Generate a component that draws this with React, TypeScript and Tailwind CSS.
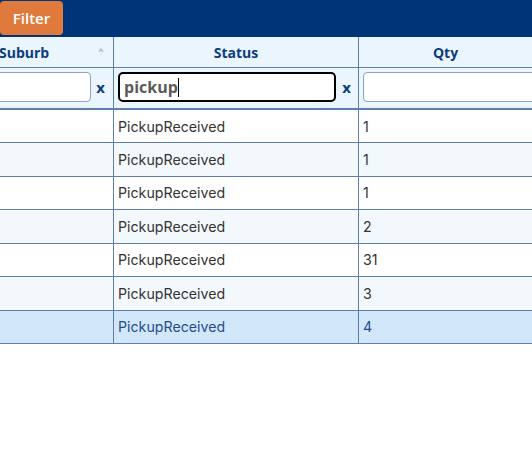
import React from "react";

const rows = [
  { status: "PickupReceived", qty: "1" },
  { status: "PickupReceived", qty: "1" },
  { status: "PickupReceived", qty: "1" },
  { status: "PickupReceived", qty: "2" },
  { status: "PickupReceived", qty: "31" },
  { status: "PickupReceived", qty: "3" },
  { status: "PickupReceived", qty: "4", selected: true },
];

const SortIcon = () => (
  <svg width="8" height="10" viewBox="0 0 8 10">
    <path d="M4 1 L7 4.5 L1 4.5 Z" fill="#b3c0d0" />
    <path d="M4 9 L7 5.5 L1 5.5 Z" fill="#e4ecf5" />
  </svg>
);

const ClearX = () => (
  <span className="font-['Open_Sans',sans-serif] text-[15px] font-bold text-[#0b3d7a] leading-none">
    x
  </span>
);

export default function App() {
  return (
    <div className="w-[532px] h-[458px] bg-white overflow-hidden font-['Inter',sans-serif]">
      {/* top bar */}
      <div className="h-[37px] bg-[#003478] flex items-start pt-px">
        <button className="h-[34px] w-[63px] rounded-[4px] bg-[#e07a3c] text-white font-['Open_Sans',sans-serif] text-[15px] font-semibold flex items-center justify-center pt-px">
          Filter
        </button>
      </div>

      {/* header */}
      <div className="grid grid-cols-[114px_245px_1fr] h-[31px] bg-[#eaf5fe] border-b border-[#5e7fae] font-['Open_Sans',sans-serif] text-[14px] font-bold text-[#0b3d7a]">
        <div className="border-r border-[#5e7fae] flex items-center justify-between pr-[8px]">
          <span className="-ml-px">Suburb</span>
          <SortIcon />
        </div>
        <div className="border-r border-[#5e7fae] flex items-center justify-center">
          Status
        </div>
        <div className="flex items-center justify-center">Qty</div>
      </div>

      {/* filter row */}
      <div className="grid grid-cols-[114px_245px_1fr] h-[42px] bg-[#eaf5fe] border-b-2 border-[#5e7fae]">
        <div className="border-r border-[#5e7fae] flex items-center gap-[5px] pr-[8px] pb-[2px]">
          <div className="h-[30px] flex-1 -ml-4 bg-white border border-[#8ea6c6] rounded-[4px]" />
          <ClearX />
        </div>
        <div className="border-r border-[#5e7fae] flex items-center gap-[6px] pl-[4px] pr-[7px] pb-[2px]">
          <div className="h-[30px] flex-1 bg-white border-2 border-black rounded-[5px] flex items-center pl-[4px]">
            <span className="font-['Open_Sans',sans-serif] text-[16px] font-bold text-[#5a5a5a]">
              pickup
            </span>
            <span className="w-px h-[19px] bg-black" />
          </div>
          <ClearX />
        </div>
        <div className="flex items-center pl-[4px] pb-[2px] overflow-hidden">
          <div className="h-[30px] w-[200px] shrink-0 bg-white border border-[#8ea6c6] rounded-[4px]" />
        </div>
      </div>

      {/* rows */}
      {rows.map((r, i) => (
        <div
          key={i}
          className={`grid grid-cols-[114px_245px_1fr] h-[33.43px] border-b border-[#5e7fae] text-[14.2px] ${
            r.selected
              ? "bg-[#d3e7fa] text-[#1f4e8c]"
              : i % 2 === 1
              ? "bg-[#f3f8fd] text-[#333]"
              : "bg-white text-[#333]"
          }`}
        >
          <div className="border-r border-[#5e7fae]" />
          <div className="border-r border-[#5e7fae] flex items-center px-1">
            {r.status}
          </div>
          <div className="flex items-center px-1">{r.qty}</div>
        </div>
      ))}
    </div>
  );
}
